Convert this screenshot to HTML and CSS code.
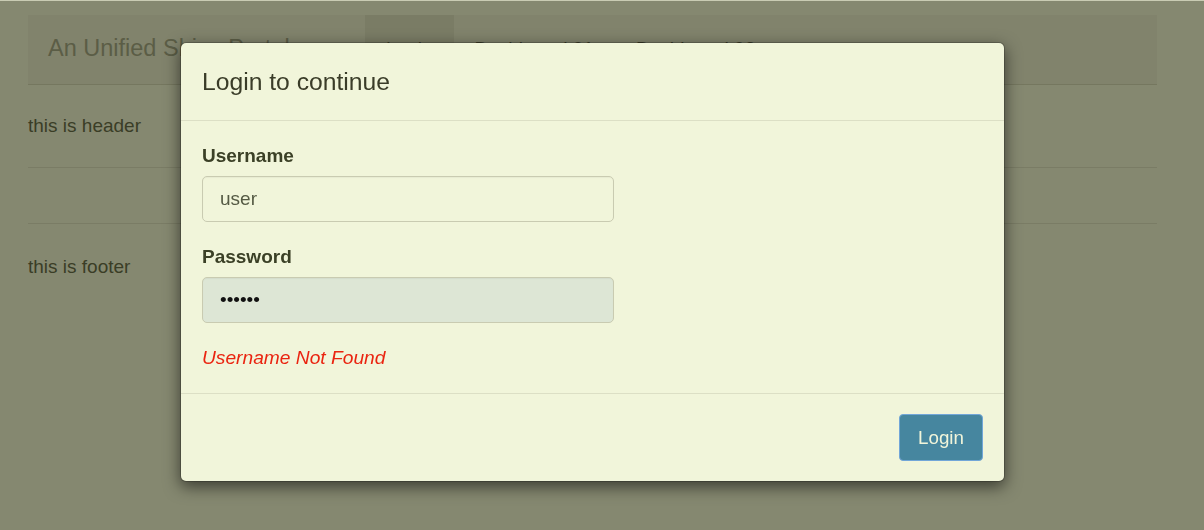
FILE: index.html
```html
<!DOCTYPE html>
<html lang="en">
<head>
<meta charset="utf-8">
<title>An Unified Shiny Portal</title>
<link rel="stylesheet" href="styles.css">
</head>
<body>
<div class="page">
  <nav class="navbar">
    <span class="brand">An Unified Shiny Portal</span>
    <ul class="nav">
      <li class="nav-item active">Login</li>
      <li class="nav-item">Dashboard 01</li>
      <li class="nav-item">Dashboard 02</li>
    </ul>
  </nav>
  <p class="page-header">this is header</p>
  <hr class="rule">
  <div class="main"></div>
  <hr class="rule">
  <p class="page-footer">this is footer</p>
</div>

<div class="backdrop">
  <div class="modal">
    <div class="modal-header">
      <h4 class="modal-title">Login to continue</h4>
    </div>
    <div class="modal-body">
      <div class="form-group">
        <label class="label" for="username">Username</label>
        <input class="input" id="username" type="text" value="user">
      </div>
      <div class="form-group">
        <label class="label" for="password">Password</label>
        <input class="input input-filled" id="password" type="password" value="123456">
      </div>
      <p class="error">Username Not Found</p>
    </div>
    <div class="modal-footer">
      <button class="btn" type="button">Login</button>
    </div>
  </div>
</div>
</body>
</html>
```

FILE: styles.css
```css
* { box-sizing: border-box; }

html, body {
  margin: 0;
  padding: 0;
}

body {
  background: #858870;
  border-top: 1px solid #c9cbb3;
  font-family: "Liberation Sans", Arial, sans-serif;
  color: #3a3d26;
  height: 530px;
  overflow: hidden;
}

.page {
  width: 1129px;
  margin-left: 28px;
  padding-top: 14px;
}

.navbar {
  display: flex;
  align-items: flex-start;
  height: 70px;
  background: #81836c;
  border-bottom: 1px solid #75775f;
  padding-left: 20px;
}

.brand {
  font-size: 23.5px;
  line-height: 27px;
  padding-top: 20px;
  color: #5b5d46;
  width: 317px;
}

.nav {
  list-style: none;
  margin: 0;
  padding: 0;
  display: flex;
  height: 69px;
}

.nav-item {
  font-size: 19px;
  line-height: 27px;
  padding: 20px 21px 0;
  color: #3e402a;
}

.nav-item.active {
  background: #7a7c65;
}

.page-header,
.page-footer {
  font-size: 19px;
  line-height: 25px;
  margin: 0;
}

.page-header { padding-top: 28px; }
.page-footer { padding-top: 30px; }

.rule {
  border: 0;
  border-top: 1px solid #7a7c65;
  margin: 0;
}

.page-header + .rule { margin-top: 29px; }

.main { height: 55px; }

/* modal */
.backdrop {
  position: fixed;
  inset: 0;
  padding: 42px 0 0 180px;
}

.modal {
  width: 825px;
  background: #f1f5da;
  border: 1px solid rgba(0, 0, 0, 0.2);
  border-radius: 6px;
  box-shadow: 0 5px 16px rgba(0, 0, 0, 0.55);
  background-clip: padding-box;
}

.modal-header {
  padding: 25px 21px 25px;
  border-bottom: 1px solid #dcdfc5;
}

.modal-title {
  margin: 0;
  font-size: 24.7px;
  line-height: 27px;
  font-weight: normal;
  color: #3a3c28;
}

.modal-body {
  padding: 21px 21px 22px;
}

.form-group { margin-bottom: 21px; }

.label {
  display: block;
  font-size: 19px;
  line-height: 27px;
  font-weight: bold;
  color: #3b4026;
  margin-bottom: 7px;
}

.input {
  display: block;
  width: 412px;
  height: 46px;
  padding: 0 17px;
  font-family: "Liberation Sans", Arial, sans-serif;
  font-size: 19px;
  color: #555a44;
  background: #f1f5da;
  border: 1px solid #c9cbb1;
  border-radius: 5px;
  box-shadow: inset 0 1px 1px rgba(0, 0, 0, 0.04);
  outline: none;
}

.input-filled {
  background: #dde6d5;
  color: #111;
}

.error {
  margin: 0;
  font-size: 19.2px;
  line-height: 27px;
  font-style: italic;
  color: #ea2410;
}

.modal-footer {
  display: flex;
  justify-content: flex-end;
  padding: 20px 21px 20px;
  border-top: 1px solid #dcdfc5;
}

.btn {
  height: 47px;
  width: 84px;
  padding: 0;
  font-family: "Liberation Sans", Arial, sans-serif;
  font-size: 18.75px;
  color: #f1f5da;
  background: #46869f;
  border: 1px solid #72a6d8;
  border-radius: 4px;
}
```
